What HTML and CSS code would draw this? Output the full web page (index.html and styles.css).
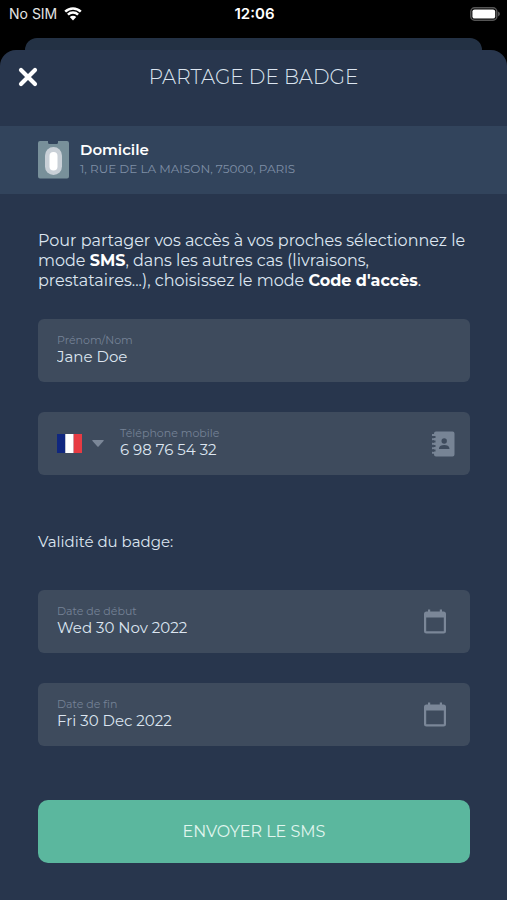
FILE: index.html
```html
<!DOCTYPE html>
<html lang="fr">
<head>
<meta charset="utf-8">
<meta name="viewport" content="width=device-width, initial-scale=1">
<title>Partage de badge</title>
<link rel="stylesheet" href="styles.css">
</head>
<body>
<div class="status">
  <div class="carrier">
    <span>No SIM</span>
    <svg class="wifi" viewBox="0 0 18 14" aria-hidden="true">
      <path d="M1.200 4.600A11.200 11.200 0 0 1 16.800 4.600M3.900 7.700A7.300 7.300 0 0 1 14.100 7.700" fill="none" stroke="#fff" stroke-width="2.500"/>
      <path d="M5.800 10.100A4.600 4.600 0 0 1 12.200 10.100L9 13.600Z" fill="#fff"/>
    </svg>
  </div>
  <time class="clock">12:06</time>
  <svg class="battery" viewBox="0 0 30 14" aria-hidden="true">
    <rect x=".8" y=".8" width="26" height="12.400" rx="3.800" fill="none" stroke="#555" stroke-width="1.500"/>
    <rect x="2.400" y="2.400" width="22.800" height="9.200" rx="2.200" fill="#fff"/>
    <path d="M28 4.600Q30 5.600 30 7T28 9.400Z" fill="#555"/>
  </svg>
</div>
<div class="backsheet"></div>
<main class="sheet">
  <header class="top">
    <button class="close" type="button" aria-label="Fermer">
      <svg viewBox="0 0 20 20" aria-hidden="true"><path d="M3 3L17 17M17 3L3 17" stroke="#fff" stroke-width="4.200" stroke-linecap="round"/></svg>
    </button>
    <h1>PARTAGE DE BADGE</h1>
  </header>
  <section class="place">
    <svg class="badge" viewBox="0 0 31 38" aria-hidden="true">
      <path d="M2 0H10V1.500Q10 3 11.500 3H18.500Q20 3 20 1.500V0H29Q31 0 31 2V35.500Q31 37.500 29 37.500H2Q0 37.500 0 35.500V2Q0 0 2 0Z" fill="#78909a"/>
      <rect x="7" y="6" width="17" height="28" rx="8.500" fill="#c9d0d7"/>
      <rect x="11.500" y="11" width="8" height="18.500" rx="4" fill="#fff"/>
    </svg>
    <div>
      <h2>Domicile</h2>
      <p>1, RUE DE LA MAISON, 75000, PARIS</p>
    </div>
  </section>
  <form class="form">
    <p class="intro">Pour partager vos accès à vos proches sélectionnez le mode <strong>SMS</strong>, dans les autres cas (livraisons, prestataires...), choisissez le mode <strong>Code d'accès</strong>.</p>
    <div class="fields">
      <div class="field">
        <div class="entry">
          <label for="name">Prénom/Nom</label>
          <input id="name" type="text" value="Jane Doe">
        </div>
      </div>
      <div class="field phone">
        <div class="country">
          <svg class="flag" viewBox="0 0 25 19" aria-hidden="true"><path d="M0 0H8.300V19H0Z" fill="#10277f"/><path d="M8.300 0H16.700V19H8.300Z" fill="#fff"/><path d="M16.700 0H25V19H16.700Z" fill="#e73b43"/></svg>
          <svg class="caret" viewBox="0 0 12 7" aria-hidden="true"><path d="M.5 0H11.500Q12 .5 11.500 1L6.600 6.500Q6 7 5.400 6.500L.5 1Q0 .5 .5 0Z" fill="#7b8798"/></svg>
          <select aria-label="Pays"><option value="FR" aria-label="France"></option></select>
        </div>
        <div class="entry">
          <label for="tel">Téléphone mobile</label>
          <input id="tel" type="tel" value="6 98 76 54 32">
        </div>
        <button class="tool" type="button" aria-label="Contacts">
          <svg viewBox="0 0 24 26" aria-hidden="true">
            <path d="M5 .5H21.500Q23.500 .5 23.500 2.500V23.500Q23.500 25.500 21.500 25.500H5Q3 25.500 3 23.500V22.700H1V20.700H3V18.200H1V16.200H3V13.700H1V11.700H3V9.200H1V7.200H3V4.900H1V2.900H3V2.500Q3 .5 5 .5Z" fill="#778495"/>
            <path d="M2 6H4.500M2 10.500H4.500M2 15H4.500M2 19.500H4.500" stroke="#3e4b5d" stroke-width="1.800"/>
            <circle cx="13.200" cy="10" r="2.700" fill="#3e4b5d"/>
            <path d="M8 18V17Q8.600 14 13.200 14T18.400 17V18Z" fill="#3e4b5d"/>
          </svg>
        </button>
      </div>
    </div>
    <h3>Validité du badge:</h3>
    <div class="fields">
      <div class="field dated">
        <div class="entry">
          <label for="start">Date de début</label>
          <input id="start" type="text" value="Wed 30 Nov 2022">
        </div>
        <button class="tool" type="button" aria-label="Choisir la date de début">
          <svg viewBox="0 0 24 26" aria-hidden="true"><path d="M5 .5H7.200V2.500H16.800V.5H19V2.500H20.500Q23 2.500 23 5V22Q23 24.500 20.500 24.500H3.500Q1 24.500 1 22V5Q1 2.500 3.500 2.500H5ZM3.200 8.500V22.300H20.800V8.500Z" fill="#7b8798" fill-rule="evenodd"/></svg>
        </button>
      </div>
      <div class="field dated">
        <div class="entry">
          <label for="end">Date de fin</label>
          <input id="end" type="text" value="Fri 30 Dec 2022">
        </div>
        <button class="tool" type="button" aria-label="Choisir la date de fin">
          <svg viewBox="0 0 24 26" aria-hidden="true"><path d="M5 .5H7.200V2.500H16.800V.5H19V2.500H20.500Q23 2.500 23 5V22Q23 24.500 20.500 24.500H3.500Q1 24.500 1 22V5Q1 2.500 3.500 2.500H5ZM3.200 8.500V22.300H20.800V8.500Z" fill="#7b8798" fill-rule="evenodd"/></svg>
        </button>
      </div>
    </div>
    <button class="send" type="submit">ENVOYER LE SMS</button>
  </form>
</main>
</body>
</html>
```
FILE: styles.css
```css
* { box-sizing: border-box; }
body {
  margin: 0;
  min-height: 100vh;
  display: flex;
  flex-direction: column;
  background: #000;
  color: #dce5f0;
  font-family: Montserrat, Inter, "Liberation Sans", sans-serif;
  font-size: 16px;
}
h1, h2, h3, p { margin: 0; font-weight: 400; }
svg { display: block; flex: none; }
button, input, select { font: inherit; color: inherit; border: 0; padding: 0; background: none; }
button { cursor: pointer; }

.status {
  display: grid;
  grid-template-columns: 1fr auto 1fr;
  align-items: center;
  height: 38px;
  padding: 0 7px 11px 9px;
  font-family: Inter, sans-serif;
  font-size: 15px;
  color: #e4e4e4;
}
.carrier { display: flex; align-items: center; gap: 7px; font-size: 14px; }
.wifi { width: 18px; height: 14px; }
.clock { font-weight: 600; color: #fff; }
.battery { width: 30px; height: 14px; justify-self: end; }

.backsheet { height: 12px; margin: 0 25px; border-radius: 12px 12px 0 0; background: #233144; }
.sheet { flex: 1; border-radius: 16px 16px 0 0; background: #28364d; }
.top {
  display: grid;
  grid-template-columns: 20px 1fr 20px;
  align-items: center;
  height: 76px;
  padding: 0 18px 22px;
}
.close svg { width: 20px; height: 20px; }
h1 { text-align: center; font-size: 20px; font-weight: 300; line-height: 24px; }

.place {
  display: flex;
  align-items: center;
  gap: 11px;
  padding: 14px 37px 15px 38px;
  background: #32445c;
}
.badge { width: 31px; height: 38px; }
h2 { font-size: 15px; font-weight: 600; line-height: 19px; color: #fff; }
.place p { font-size: 12px; line-height: 20px; color: #7f8fa6; }

.form { padding: 37px 37px 37px 38px; }
.intro { line-height: 20px; margin-bottom: 28px; }
strong { font-weight: 700; color: #fff; }
.fields { display: grid; gap: 30px; }
.field {
  display: flex;
  align-items: center;
  height: 63px;
  padding: 0 15px 0 19px;
  border-radius: 6px;
  background: #3e4b5d;
}
.dated { padding-right: 23px; }
.entry { flex: 1; min-width: 0; display: flex; flex-direction: column; padding-bottom: 2px; }
.entry label { font-size: 11px; line-height: 14px; color: #758296; }
.entry input { width: 100%; height: 20px; font-size: 15px; outline: 0; }
.country { position: relative; display: flex; align-items: center; gap: 10px; margin-right: 16px; }
.country select { position: absolute; inset: 0; width: 100%; appearance: none; cursor: pointer; }
.flag { width: 25px; height: 19px; }
.caret { width: 12px; height: 7px; }
.tool svg { width: 24px; height: 26px; }

h3 { margin: 57px 0 38px; font-size: 15px; line-height: 20px; }
.send {
  display: block;
  width: 100%;
  height: 63px;
  margin-top: 54px;
  border-radius: 10px;
  background: #5bb79e;
  color: #e0f5ee;
}
```
